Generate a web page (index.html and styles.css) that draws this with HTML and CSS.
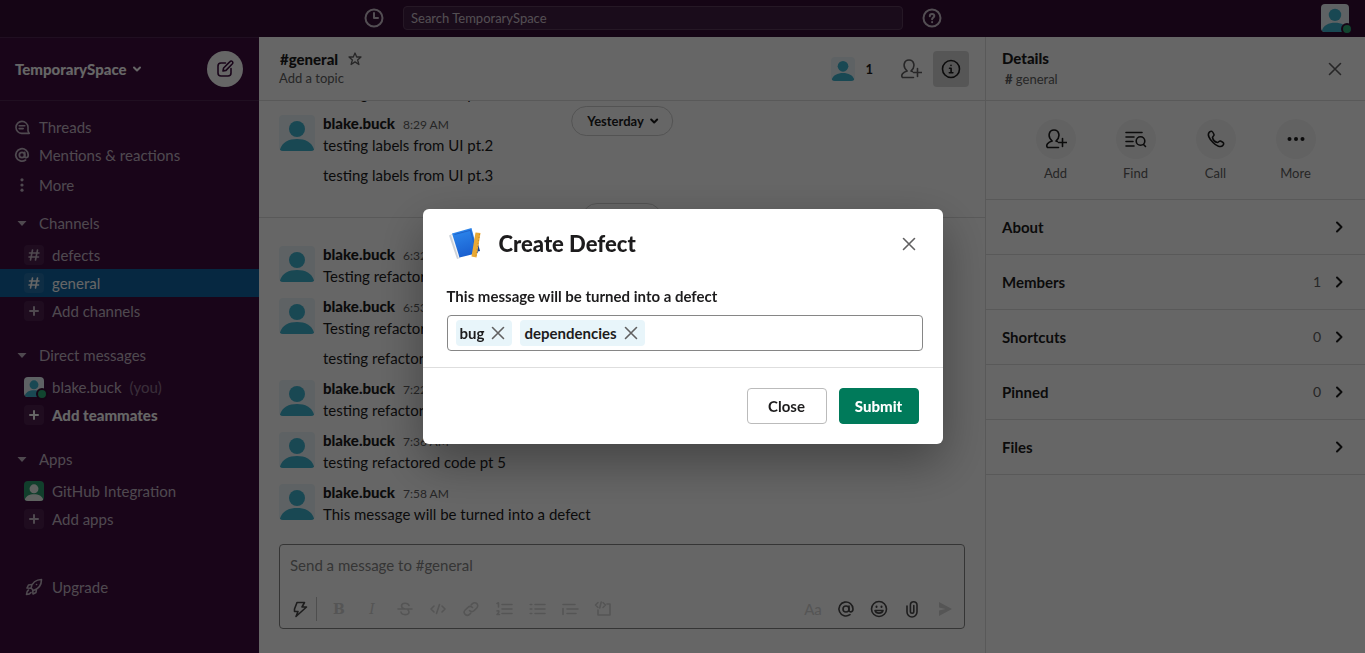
FILE: index.html
```html
<!DOCTYPE html>
<html lang="en">
<head>
<meta charset="utf-8">
<title>general | TemporarySpace</title>
<meta name="viewport" content="width=device-width, initial-scale=1">
<link rel="stylesheet" href="styles.css">
</head>
<body>
<svg class="sprite" aria-hidden="true">
  <symbol id="person" viewBox="0 0 36 36"><circle cx="18" cy="14" r="8"/><path d="M1 34.500C3 27 10 24 18 24s15 3 17 10.500c0 1-.5 1.500-1.500 1.500h-31C1.500 36 1 35.500 1 34.500z"/></symbol>
  <symbol id="hash" viewBox="0 0 20 20"><path d="M8.500 5l-2 10M13.500 5l-2 10M5.500 8h9.500M5 12h9.500"/></symbol>
  <symbol id="plus" viewBox="0 0 20 20"><path d="M10 6v8M6 10h8"/></symbol>
  <symbol id="at" viewBox="0 0 20 20"><circle cx="10" cy="10" r="3"/><path d="M13 7v4c0 2.700 4 2.700 4-1a7 7 0 1 0-3 5.700"/></symbol>
  <symbol id="close" viewBox="0 0 20 20"><path d="M4.500 4.500l11 11M15.500 4.500l-11 11"/></symbol>
  <symbol id="down" viewBox="0 0 12 12"><path d="M3 4.500l3 3 3-3"/></symbol>
  <symbol id="right" viewBox="0 0 20 20"><path d="M8 5.500l4.500 4.500L8 14.500"/></symbol>
  <symbol id="caret" viewBox="0 0 20 20"><path d="M5.500 8h9L10 13z"/></symbol>
  <symbol id="adduser" viewBox="0 0 22 22"><path d="M13.500 19.500H2.500c-2-2.500.5-5.500 4.700-6.500-5-4-3.500-11 1.800-11s6.800 7 2 11l1.300.5M17.500 10.500v8M13.500 14.500h8"/></symbol>
</svg>

<div class="app">
  <header class="topbar">
    <button class="icon-btn topbar-history" aria-label="History"><svg class="icon stroke-bold" viewBox="0 0 20 20"><circle cx="10" cy="10" r="8.500"/><path d="M10 5v5h4"/></svg></button>
    <input class="search" type="text" placeholder="Search TemporarySpace" aria-label="Search TemporarySpace">
    <button class="icon-btn topbar-help" aria-label="Help"><svg class="icon stroke-bold" viewBox="0 0 20 20"><circle cx="10" cy="10" r="8.500"/><path d="M7.800 8.200c0-3 4.500-2.800 4.500-.2 0 1.600-2.200 1.700-2.200 3.200M10.100 14v.2"/></svg></button>
    <button class="avatar avatar-top" aria-label="Your profile"><svg class="person" viewBox="0 0 36 36"><use href="#person"/></svg><span class="presence"></span></button>
  </header>

  <nav class="sidebar" aria-label="Workspace">
    <div class="workspace">
      <button class="workspace-name">TemporarySpace<svg class="icon-12 stroke-bold" viewBox="0 0 12 12"><use href="#down"/></svg></button>
      <button class="compose" aria-label="New message"><svg class="icon stroke" viewBox="0 0 20 20"><path d="M10.500 4H6a3 3 0 0 0-3 3v7a3 3 0 0 0 3 3h7a3 3 0 0 0 3-3V9.500M8 12l.6-3L15 2.600a1.500 1.500 0 0 1 2.400 2.200L11 11.400z"/></svg></button>
    </div>
    <div class="side-list">
      <div class="side-group side-top">
        <a class="side-row" href="#threads"><svg class="icon-16 stroke-bold" viewBox="0 0 20 20"><path d="M17.500 18h-8A7.500 7.500 0 1 1 17.500 10v5l1.500 3zM6.500 8.500h7M6.500 12h5"/></svg>Threads</a>
        <a class="side-row" href="#mentions"><svg class="icon-16 stroke-bold" viewBox="1 1 18 18"><use href="#at" width="20" height="20"/></svg>Mentions &amp; reactions</a>
      </div>
      <a class="side-row side-more" href="#more"><svg class="icon-16 fill" viewBox="0 0 20 20"><circle cx="10" cy="3.500" r="2"/><circle cx="10" cy="10" r="2"/><circle cx="10" cy="16.500" r="2"/></svg>More</a>
      <section class="side-group">
        <button class="side-row side-head"><svg class="icon-16 fill" viewBox="2 2 16 16"><use href="#caret" width="20" height="20"/></svg>Channels</button>
        <a class="side-row side-child" href="#defects"><span class="tile"><svg class="icon stroke"><use href="#hash"/></svg></span>defects</a>
        <a class="side-row side-child selected" href="#general"><span class="tile"><svg class="icon stroke"><use href="#hash"/></svg></span>general</a>
        <button class="side-row side-child"><span class="tile"><svg class="icon stroke-bold"><use href="#plus"/></svg></span>Add channels</button>
      </section>
      <section class="side-group">
        <button class="side-row side-head"><svg class="icon-16 fill" viewBox="2 2 16 16"><use href="#caret" width="20" height="20"/></svg>Direct messages</button>
        <a class="side-row side-child" href="#blake"><span class="avatar avatar-side"><svg class="person" viewBox="0 0 36 36"><use href="#person"/></svg><span class="presence"></span></span>blake.buck<span class="you">(you)</span></a>
        <button class="side-row side-child strong"><span class="tile"><svg class="icon stroke-bold"><use href="#plus"/></svg></span>Add teammates</button>
      </section>
      <section class="side-group">
        <button class="side-row side-head"><svg class="icon-16 fill" viewBox="2 2 16 16"><use href="#caret" width="20" height="20"/></svg>Apps</button>
        <a class="side-row side-child" href="#github"><span class="avatar avatar-side avatar-app"><svg class="person" viewBox="0 0 36 36"><use href="#person"/></svg></span>GitHub Integration</a>
        <button class="side-row side-child"><span class="tile"><svg class="icon stroke-bold"><use href="#plus"/></svg></span>Add apps</button>
      </section>
      <a class="side-row side-child side-upgrade" href="#upgrade"><svg class="icon stroke" viewBox="0 0 20 20"><path d="M7 11c1-5 5-8.500 10.500-8.500C17.500 8 14 12 9.500 13.500zM8 7.500L4.500 8 3 11l3.500.2M12.500 12l-.5 3.500L9 17l-.3-3.500M4.500 13c-1.500 1-2 2.500-2 4.500 2 0 3.500-.5 4.500-2M12.500 7.500h.1"/></svg>Upgrade</a>
    </div>
  </nav>

  <main class="channel">
    <div class="panel-head">
      <div class="channel-title">
        <div class="title-line"><h1>#general</h1><button class="icon-btn star" aria-label="Star channel"><svg class="icon-14 stroke-thin" viewBox="0 0 14 14"><path d="M7 1l1.700 4h4.300l-3.400 2.900 1.300 4.600L7 9.900l-3.900 2.600 1.300-4.600L1 5h4.300z"/></svg></button></div>
        <button class="topic">Add a topic</button>
      </div>
      <div class="channel-tools">
        <button class="members"><span class="avatar avatar-member"><svg class="person" viewBox="0 0 36 36"><use href="#person"/></svg></span>1</button>
        <button class="tool" aria-label="Add people"><svg class="icon-22 stroke"><use href="#adduser"/></svg></button>
        <button class="tool tool-active" aria-label="Details"><svg class="icon stroke" viewBox="0 0 20 20"><circle cx="10" cy="10" r="8.500"/><path d="M8.500 9.200h1.600v4.600M8.300 13.800h3.600M10 6.200v.3"/></svg></button>
      </div>
    </div>
    <div class="history">
      <button class="day-pill day-sticky">Yesterday<svg class="icon-12 stroke-bold" viewBox="0 0 12 12"><use href="#down"/></svg></button>
      <article class="message follow"><p>testing labels from UI pt.1</p></article>
      <article class="message"><span class="avatar"><svg class="person" viewBox="0 0 36 36"><use href="#person"/></svg></span><div><h2>blake.buck <time>8:29 AM</time></h2><p>testing labels from UI pt.2</p></div></article>
      <article class="message follow"><p>testing labels from UI pt.3</p></article>
      <div class="divider"><button class="day-pill">Today<svg class="icon-12 stroke-bold" viewBox="0 0 12 12"><use href="#down"/></svg></button></div>
      <article class="message"><span class="avatar"><svg class="person" viewBox="0 0 36 36"><use href="#person"/></svg></span><div><h2>blake.buck <time>6:32 AM</time></h2><p>Testing refactored code</p></div></article>
      <article class="message"><span class="avatar"><svg class="person" viewBox="0 0 36 36"><use href="#person"/></svg></span><div><h2>blake.buck <time>6:53 AM</time></h2><p>Testing refactored code</p></div></article>
      <article class="message follow"><p>testing refactored code</p></article>
      <article class="message"><span class="avatar"><svg class="person" viewBox="0 0 36 36"><use href="#person"/></svg></span><div><h2>blake.buck <time>7:22 AM</time></h2><p>testing refactored code</p></div></article>
      <article class="message"><span class="avatar"><svg class="person" viewBox="0 0 36 36"><use href="#person"/></svg></span><div><h2>blake.buck <time>7:36 AM</time></h2><p>testing refactored code pt 5</p></div></article>
      <article class="message"><span class="avatar"><svg class="person" viewBox="0 0 36 36"><use href="#person"/></svg></span><div><h2>blake.buck <time>7:58 AM</time></h2><p>This message will be turned into a defect</p></div></article>
    </div>
    <div class="composer">
      <textarea rows="1" placeholder="Send a message to #general" aria-label="Send a message to #general"></textarea>
      <div class="toolbar">
        <button class="fmt on" aria-label="Shortcuts"><svg class="icon-18 stroke" viewBox="0 0 18 18"><path d="M6 2.500h7.500L11 7h4.500L5 16.500 7 11.500H3.500V9z"/></svg></button>
        <span class="bar"></span>
        <button class="fmt fmt-letter bold" aria-label="Bold">B</button>
        <button class="fmt fmt-letter italic" aria-label="Italic">I</button>
        <button class="fmt" aria-label="Strikethrough"><svg class="icon-18 stroke" viewBox="0 0 18 18"><path d="M2 9h14M13 5.500C12 2.500 5.500 2.500 5.500 6c0 1.500 1.500 2.500 3.500 3M5 12c.5 3.500 8 3.500 8 .3 0-1-.5-1.800-1-2.300"/></svg></button>
        <button class="fmt" aria-label="Code"><svg class="icon-18 stroke" viewBox="0 0 18 18"><path d="M5 6L2 9l3 3M13 6l3 3-3 3M10.500 4.500l-3 9"/></svg></button>
        <button class="fmt" aria-label="Link"><svg class="icon-18 stroke" viewBox="0 0 18 18"><path d="M7.500 10.500a3 3 0 0 0 4.500.2l2.800-2.700a3 3 0 0 0-4.300-4.400L9.300 4.800M10.500 7.500a3 3 0 0 0-4.500-.2L3.200 10a3 3 0 0 0 4.300 4.400l1.200-1.200"/></svg></button>
        <button class="fmt" aria-label="Numbered list"><svg class="icon-18 stroke" viewBox="0 0 18 18"><path d="M7 4.500h10M7 9h10M7 13.500h10M2 3.500l1.500-.7V7M2 11c2-1 3 .5 0 3.500h2.500"/></svg></button>
        <button class="fmt" aria-label="Bulleted list"><svg class="icon-18 stroke" viewBox="0 0 18 18"><path d="M7 4.500h10M7 9h10M7 13.500h10M2.200 4.500h1.600M2.200 9h1.600M2.200 13.500h1.600"/></svg></button>
        <button class="fmt" aria-label="Quote"><svg class="icon-18 stroke" viewBox="0 0 18 18"><path d="M2 4.500h12M6 9h11M6 13.500h9M2 8.500v6"/></svg></button>
        <button class="fmt" aria-label="Code block"><svg class="icon-18 stroke" viewBox="0 0 18 18"><path d="M4 2.500L1.500 5 4 7.500M9 2.500L11.500 5 9 7.500M7.200 2l-1.500 6M13 4h3v11H4v-5"/></svg></button>
        <span class="grow"></span>
        <button class="fmt aa" aria-label="Formatting">Aa</button>
        <button class="fmt on" aria-label="Mention"><svg class="icon-18 stroke" viewBox="1 1 18 18"><use href="#at" width="20" height="20"/></svg></button>
        <button class="fmt on" aria-label="Emoji"><svg class="icon-18 stroke" viewBox="1 1 18 18"><circle cx="10" cy="10" r="7.500"/><path d="M6 11.500c1 3.500 7 3.500 8 0z"/><path class="eye" d="M7.500 7.500v.5M12.500 7.500v.5"/></svg></button>
        <button class="fmt on" aria-label="Attach"><svg class="icon-18 stroke" viewBox="0 0 18 18"><path d="M4 6v6a5 5 0 0 0 10 0V5a3.300 3.300 0 0 0-6.600 0v6.500a1.700 1.700 0 0 0 3.400 0V5.500"/></svg></button>
        <button class="fmt" aria-label="Send"><svg class="icon-16 fill" viewBox="0 0 16 16"><path d="M2 1l13 7-13 7V9.500L8.500 8 2 6.500z"/></svg></button>
      </div>
    </div>
  </main>

  <aside class="details">
    <div class="panel-head">
      <div><h2>Details</h2><p class="details-sub"><b>#</b> general</p></div>
      <button class="icon-btn" aria-label="Close details"><svg class="icon stroke"><use href="#close"/></svg></button>
    </div>
    <div class="actions">
      <button><span><svg class="icon-22 stroke"><use href="#adduser"/></svg></span>Add</button>
      <button><span><svg class="icon-22 stroke" viewBox="0 0 22 22"><path d="M1 4.500h16M1 9h8M1 13.500h7M1 18h8M20.500 18.500L18.500 16.500"/><circle cx="15.500" cy="13" r="4.300"/></svg></span>Find</button>
      <button><span><svg class="icon stroke" viewBox="0 0 20 20"><path d="M3.300 3.200C5.500 1.500 6.500 2 8 5.500c.5 1.300-1.500 2-1.500 3 .5 2.500 2.700 4.500 5 5 1 0 1.700-2 3-1.500 3.500 1.500 4 2.500 2.300 4.500-2 2.300-6.500.5-9.800-3C3.300 10 1 5.500 3.300 3.200z"/></svg></span>Call</button>
      <button><span><svg class="icon fill" viewBox="0 0 20 20"><circle cx="3.500" cy="10" r="2"/><circle cx="10" cy="10" r="2"/><circle cx="16.500" cy="10" r="2"/></svg></span>More</button>
    </div>
    <button class="detail-row">About<svg class="icon stroke-bold"><use href="#right"/></svg></button>
    <button class="detail-row">Members<span>1</span><svg class="icon stroke-bold"><use href="#right"/></svg></button>
    <button class="detail-row">Shortcuts<span>0</span><svg class="icon stroke-bold"><use href="#right"/></svg></button>
    <button class="detail-row">Pinned<span>0</span><svg class="icon stroke-bold"><use href="#right"/></svg></button>
    <button class="detail-row">Files<svg class="icon stroke-bold"><use href="#right"/></svg></button>
  </aside>
</div>

<div class="overlay">
  <form class="modal" role="dialog" aria-modal="true" aria-labelledby="modal-title">
    <header class="modal-head">
      <svg class="app-logo" viewBox="0 0 36 36" aria-hidden="true">
        <defs><linearGradient id="cover" x1="0" y1="0" x2="0.300" y2="1"><stop offset="0" stop-color="#2f8cf0"/><stop offset="1" stop-color="#1a60d0"/></linearGradient></defs>
        <path fill="#cfd3d8" d="M2 9.500l4-2L13 32l-3 1z"/><path fill="#f5f6f8" d="M4 9l2.500-1L14 30l-2.500 2z"/>
        <path fill="#123f93" d="M30 14l3 11-4 1z"/>
        <path fill="url(#cover)" d="M5 7.500L24.500 2 31 27l-18.500 4.500z"/>
        <path fill="none" stroke="#1f63c9" d="M7.500 8.500L23.500 4.300 29 25.500"/>
        <path fill="#e9a935" d="M28.500 6.500l5 .5-4 24.500-5-1z"/><path fill="none" stroke="#c98a20" stroke-dasharray="1 2" d="M32.500 8l-3.600 22.500"/>
      </svg>
      <h2 id="modal-title">Create Defect</h2>
      <button type="button" class="icon-btn" aria-label="Close dialog"><svg class="icon stroke"><use href="#close"/></svg></button>
    </header>
    <div class="modal-body">
      <label for="labels">This message will be turned into a defect</label>
      <div class="token-field">
        <span class="token">bug<button type="button" aria-label="Remove bug"><svg class="icon stroke"><use href="#close"/></svg></button></span>
        <span class="token">dependencies<button type="button" aria-label="Remove dependencies"><svg class="icon stroke"><use href="#close"/></svg></button></span>
        <input id="labels" type="text">
      </div>
    </div>
    <footer class="modal-foot">
      <button type="button" class="btn">Close</button>
      <button type="button" class="btn btn-primary">Submit</button>
    </footer>
  </form>
</div>
</body>
</html>
```

FILE: styles.css
```css
* { box-sizing: border-box; }
html, body { height: 100%; }
body {
  margin: 0;
  overflow: hidden;
  font: 15px/22px Lato, "Noto Sans", sans-serif;
  color: #1d1c1d;
  background: #fff;
}
h1, h2, p { margin: 0; font-size: 15px; }
h1, h2 { font-weight: 900; }
button, input, textarea { font: inherit; color: inherit; }
button { padding: 0; border: 0; background: none; text-align: left; cursor: pointer; }
a { color: inherit; text-decoration: none; }
.sprite { position: absolute; width: 0; height: 0; }

/* icons */
svg { display: block; flex: none; }
.icon-12 { width: 12px; height: 12px; }
.icon-14 { width: 14px; height: 14px; }
.icon-16 { width: 16px; height: 16px; }
.icon-18 { width: 18px; height: 18px; }
.icon { width: 20px; height: 20px; }
.icon-22 { width: 22px; height: 22px; }
.stroke, .stroke-thin, .stroke-bold {
  fill: none;
  stroke: currentColor;
  stroke-width: 1.6;
  stroke-linecap: round;
  stroke-linejoin: round;
}
.stroke-thin { stroke-width: 1.3; }
.stroke-bold { stroke-width: 2; }
.fill { fill: currentColor; }
.icon-btn { display: flex; align-items: center; }

.app {
  display: grid;
  grid-template: 37px minmax(0, 1fr) / 259px minmax(0, 1fr) 380px;
  height: 100vh;
}

/* top bar */
.topbar {
  grid-column: 1 / -1;
  display: grid;
  grid-template-columns: 1fr minmax(0, 500px) 1fr auto;
  align-items: center;
  padding: 0 16px 1px 0;
  background: #350d36;
  color: #cfc3cf;
}
.topbar-history { justify-self: end; margin-right: 19px; }
.topbar-help { justify-self: start; margin-left: 19px; }
.search {
  width: 100%;
  height: 24px;
  padding: 0 7px;
  border: 1px solid #5d3d5e;
  border-radius: 4px;
  background: #431e44;
  font-size: 13px;
}
.search::placeholder { color: #cfc3cf; opacity: 1; }

/* avatars */
.avatar {
  position: relative;
  flex: none;
  width: 36px;
  height: 36px;
  border-radius: 4px;
  background: #ebf5f9;
}
.person { width: 100%; height: 100%; border-radius: 4px; fill: #3fb3d0; }
.avatar-top { width: 28px; height: 28px; margin-left: 15px; }
.avatar-side { width: 20px; height: 20px; }
.avatar-member { width: 24px; height: 24px; }
.avatar-app { background: #2c9f6e; }
.avatar-app .person { fill: #eef4f1; }
.presence {
  position: absolute;
  right: -4px;
  bottom: -3px;
  width: 12px;
  height: 12px;
  border: 2px solid #350d36;
  border-radius: 50%;
  background: #2bac76;
}

/* sidebar */
.sidebar {
  border-top: 1px solid #522653;
  background: #3f0e40;
  color: #c5b7c6;
}
.workspace {
  display: flex;
  align-items: center;
  justify-content: space-between;
  height: 63px;
  padding: 0 16px 0 15px;
  border-bottom: 1px solid #522653;
  color: #fff;
}
.workspace-name { display: flex; align-items: center; gap: 4px; font-weight: 900; }
.compose {
  display: grid;
  place-items: center;
  width: 36px;
  height: 36px;
  border-radius: 50%;
  background: #fff;
  color: #3f0e40;
}
.side-list { display: flex; flex-direction: column; padding-top: 12px; }
.side-group { margin-bottom: 16px; }
.side-top { margin-bottom: 2px; }
.side-more { margin-bottom: 10px; }
.side-upgrade { margin-top: 24px; }
.side-row {
  display: flex;
  align-items: center;
  gap: 9px;
  width: 100%;
  height: 28px;
  padding: 0 14px;
}
.side-head { margin-bottom: 4px; }
.side-child { gap: 8px; padding-left: 24px; }
.tile { border-radius: 4px; background: rgba(255, 255, 255, 0.08); }
.selected { background: #1164a3; color: #fff; }
.strong { color: #fff; font-weight: 900; }
.you { opacity: 0.6; }

/* shared panel header */
.panel-head {
  display: flex;
  align-items: center;
  justify-content: space-between;
  flex: none;
  height: 64px;
  border-bottom: 1px solid #dedede;
}

/* channel */
.channel { display: flex; flex-direction: column; min-height: 0; background: #fff; }
.channel .panel-head { padding: 0 16px 0 20px; }
.channel-title { color: #616061; }
.title-line { display: flex; align-items: center; gap: 10px; height: 18px; }
.title-line h1 { padding-left: 1px; color: #1d1c1d; }
.topic { display: block; font-size: 13px; line-height: 20px; }
.channel-tools { display: flex; align-items: center; color: #616061; }
.members {
  display: flex;
  align-items: center;
  gap: 10px;
  margin-right: 20px;
  color: #1d1c1d;
  font-size: 13px;
  font-weight: 700;
}
.tool { display: grid; place-items: center; width: 36px; height: 36px; border-radius: 4px; }
.tool-active { margin-left: 4px; background: #d8d8d8; color: #1d1c1d; }
.history {
  position: relative;
  display: flex;
  flex: 1;
  flex-direction: column;
  justify-content: flex-end;
  min-height: 0;
  padding-bottom: 15px;
  overflow: hidden;
}
.message { display: flex; flex: none; gap: 8px; padding: 4px 20px; }
.message .avatar { margin-top: 3px; }
.message h2 { display: flex; align-items: baseline; gap: 8px; height: 22px; }
.message time { color: #616061; font-size: 12px; font-weight: 400; }
.follow { padding-left: 64px; }
.divider {
  display: grid;
  flex: none;
  place-items: center;
  height: 49px;
  background: linear-gradient(#dedede, #dedede) 0 27px / 100% 1px no-repeat;
}
.day-pill {
  display: flex;
  align-items: center;
  gap: 4px;
  height: 30px;
  padding: 0 12px 0 15px;
  border: 1px solid #d0d0d0;
  border-radius: 15px;
  background: #fff;
  font-size: 13px;
  font-weight: 700;
}
.divider .day-pill { margin-top: 6px; }
.day-sticky { position: absolute; top: 5px; left: 50%; transform: translateX(-50%); }

/* composer */
.composer {
  flex: none;
  margin: 0 20px 24px;
  border: 1px solid #868686;
  border-radius: 4px;
}
.composer textarea {
  display: block;
  width: 100%;
  height: 50px;
  padding: 9px 10px;
  border: 0;
  outline: 0;
  background: none;
  resize: none;
}
.composer textarea::placeholder { color: #868686; opacity: 1; }
.toolbar { display: flex; align-items: center; gap: 5px; padding: 0 5px 5px 6px; color: #d4d4d4; }
.fmt { display: grid; place-items: center; width: 28px; height: 28px; }
.fmt.on { color: #4a494a; }
.bar { width: 1px; height: 24px; margin-left: -3px; margin-right: 3px; background: #c4c4c4; }
.fmt-letter { font-family: "DejaVu Serif", "Liberation Serif", serif; font-size: 14px; }
.bold { font-weight: 700; }
.italic { font-style: italic; }
.eye { stroke-width: 2; }
.grow { flex: 1; }

/* details */
.details { border-left: 1px solid #dedede; background: #fff; }
.details .panel-head { padding: 0 20px 0 16px; }
.details h2 { line-height: 20px; }
.details-sub { padding-left: 3px; color: #616061; font-size: 13px; line-height: 22px; }
.details-sub b { font-weight: 900; }
.details .icon-btn { color: #616061; }
.actions {
  display: flex;
  justify-content: center;
  height: 99px;
  padding-top: 18px;
  border-bottom: 1px solid #dedede;
  font-size: 13px;
}
.actions button {
  display: flex;
  flex-direction: column;
  align-items: center;
  gap: 3px;
  width: 80px;
  color: #616061;
}
.actions span {
  display: grid;
  place-items: center;
  width: 40px;
  height: 40px;
  border-radius: 50%;
  background: #f5f5f5;
  color: #1d1c1d;
}
.detail-row {
  display: flex;
  align-items: center;
  gap: 8px;
  width: 100%;
  height: 55px;
  padding: 0 16px;
  border-bottom: 1px solid #dedede;
  font-weight: 700;
}
.detail-row .icon { margin-left: auto; }
.detail-row span { margin-left: auto; color: #616061; font-size: 14px; font-weight: 400; }
.detail-row span + .icon { margin-left: 0; }

/* modal */
.overlay {
  position: fixed;
  inset: 0;
  display: grid;
  place-items: center;
  background: rgba(0, 0, 0, 0.6);
}
.modal {
  width: 520px;
  max-width: 100%;
  border-radius: 6px;
  background: #fff;
  box-shadow: 0 18px 48px rgba(0, 0, 0, 0.35);
}
.modal-head { display: flex; align-items: center; height: 69px; padding: 0 24px; }
.app-logo { width: 36px; height: 36px; }
.modal-head h2 { flex: 1; margin-left: 16px; font-size: 22px; line-height: 28px; }
.modal-head .icon-btn { color: #616061; }
.modal-body { padding: 7px 20px 16px 24px; border-bottom: 1px solid #dedede; }
.modal-body label { display: block; margin-bottom: 8px; font-weight: 700; }
.token-field {
  display: flex;
  align-items: center;
  gap: 8px;
  height: 36px;
  padding: 0 8px;
  border: 1px solid #868686;
  border-radius: 4px;
}
.token {
  display: flex;
  align-items: center;
  gap: 4px;
  height: 26px;
  padding: 0 4px;
  border-radius: 4px;
  background: #e8f5fa;
  font-weight: 700;
}
.token button { color: #616061; }
.token-field input { flex: 1; min-width: 0; border: 0; outline: 0; background: none; }
.modal-foot { display: flex; justify-content: flex-end; gap: 12px; padding: 20px 24px; }
.btn {
  width: 80px;
  height: 36px;
  border: 1px solid #bbb;
  border-radius: 4px;
  background: #fff;
  font-weight: 700;
  text-align: center;
}
.btn-primary { border-color: #007a5a; background: #007a5a; color: #fff; font-weight: 900; }
```
